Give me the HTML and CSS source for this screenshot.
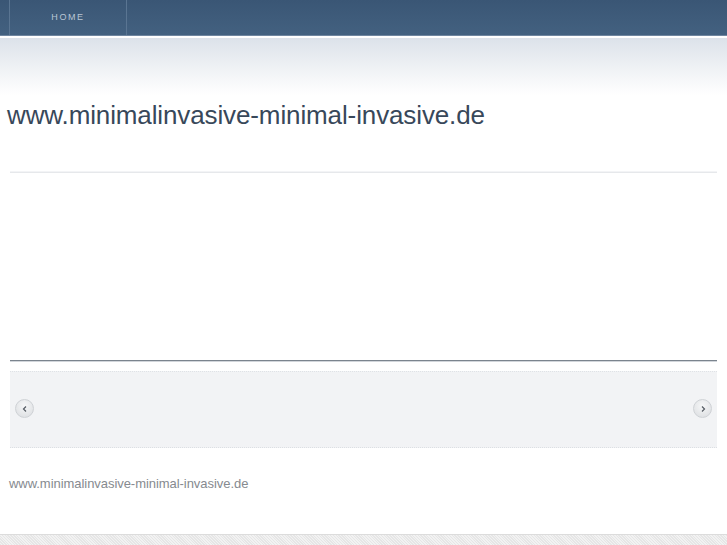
FILE: index.html
```html
<!DOCTYPE html>
<html>
<head>
<meta charset="utf-8">
<link rel="stylesheet" href="styles.css">
</head>
<body>
<div class="topbar">
  <nav class="nav">
    <a class="nav-item" href="#">HOME</a>
  </nav>
</div>
<div class="glow"></div>
<main class="content">
  <h1 class="title">www.minimalinvasive-minimal-invasive.de</h1>
  <div class="rule-light"></div>
  <div class="spacer"></div>
  <div class="rule-dark"></div>
  <div class="slider">
    <span class="arrow"><svg width="8" height="8" viewBox="0 0 8 8"><path d="M5 1.5 L2.5 4 L5 6.5" fill="none" stroke="#555b63" stroke-width="1.2"/></svg></span>
    <span class="arrow"><svg width="8" height="8" viewBox="0 0 8 8"><path d="M3 1.5 L5.5 4 L3 6.5" fill="none" stroke="#555b63" stroke-width="1.2"/></svg></span>
  </div>
  <p class="footer-text">www.minimalinvasive-minimal-invasive.de</p>
</main>
<div class="bottom-band"></div>
</body>
</html>
```
FILE: styles.css
```css
html, body {
  margin: 0;
  padding: 0;
  background: #ffffff;
  font-family: "Liberation Sans", Arial, sans-serif;
}
.topbar {
  height: 35px;
  background: linear-gradient(#3a5675, #436180);
  border-bottom: 1px solid #6f86a0;
}
.nav {
  display: flex;
  height: 35px;
  padding-left: 9px;
}
.nav-item {
  display: flex;
  align-items: center;
  justify-content: center;
  width: 118px;
  border-left: 1px solid #5a7592;
  border-right: 1px solid #5a7592;
  color: #b9c6d4;
  font-size: 9px;
  letter-spacing: 1.6px;
  text-decoration: none;
  padding-bottom: 2px;
  box-sizing: border-box;
}
.glow {
  height: 57px;
  margin-top: 2px;
  background: linear-gradient(#dce2ea, #eef1f4 50%, #ffffff);
}
.content {
  padding: 0 10px;
  margin-top: -57px;
}
.title {
  margin: 0;
  padding-top: 62px;
  margin-left: -3px;
  font-weight: normal;
  font-size: 26px;
  letter-spacing: -0.12px;
  color: #38485a;
  line-height: 30px;
  height: 71px;
}
.rule-light {
  height: 1px;
  background: #e6e8eb;
  border-top: 1px solid #f3f4f6;
}
.spacer {
  height: 187px;
}
.rule-dark {
  height: 1px;
  background: #7b848e;
  border-bottom: 1px solid #d2d6db;
}
.slider {
  margin-top: 9px;
  height: 75px;
  background: #f2f3f5;
  border-top: 1px dotted #dfe2e6;
  border-bottom: 1px dotted #dcdfe3;
  display: flex;
  align-items: center;
  justify-content: space-between;
  padding: 0 5px;
}
.arrow {
  width: 19px;
  height: 19px;
  border-radius: 50%;
  background: radial-gradient(circle at 50% 35%, #f6f7f8, #dadcdf);
  border: 1px solid #cfd2d6;
  box-sizing: border-box;
  display: flex;
  align-items: center;
  justify-content: center;
  margin-top: -2px;
}
.footer-text {
  margin: 28px 0 0 -1px;
  font-size: 13px;
  letter-spacing: -0.05px;
  color: #868a8f;
  line-height: 16px;
}
.bottom-band {
  position: fixed;
  left: 0;
  right: 0;
  bottom: 0;
  height: 10px;
  background: repeating-linear-gradient(45deg, #e6e6e6 0 1px, #f2f2f2 1px 2px);
  border-top: 1px solid #dcdcdc;
}
```
